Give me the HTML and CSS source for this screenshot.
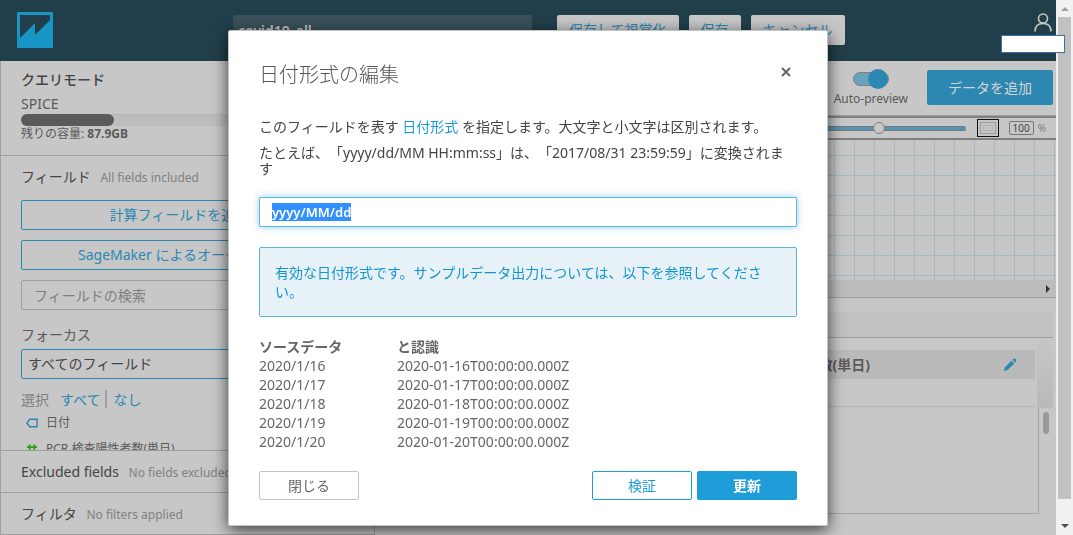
FILE: index.html
```
<!DOCTYPE html>
<html lang="ja">
<head>
    <meta charset="UTF-8">
    <meta name="viewport" content="width=device-width, initial-scale=1.0">
    <title>covid19_all</title>
    <link rel="stylesheet" href="styles.css">
</head>
<body>
    <div class="page">
        <div class="app">
            <header class="header">
                <svg class="logo" viewBox="0 0 36 36">
                    <rect width="36" height="36" rx="1" fill="#1796c5"/>
                    <path d="M3 3H33V8L18 23V11L3 26Z" fill="#213f4b"/>
                </svg>
                <input class="dataset-name" type="text" value="covid19_all" aria-label="データセット名">
                <div class="header-buttons">
                    <button>保存して視覚化</button>
                    <button>保存</button>
                    <button>キャンセル</button>
                </div>
                <svg class="user" viewBox="0 0 18 19" fill="none" stroke="#c7c7c7" stroke-width="1.6">
                    <circle cx="9" cy="5.5" r="4.5"/>
                    <path d="M1 18.5C1 13 4 10.500 9 10.500S17 13 17 18.500"/>
                </svg>
                <div class="user-name"></div>
            </header>

            <div class="content">
                <aside class="sidebar">
                    <section class="spice">
                        <h2>クエリモード</h2>
                        <div class="mode">SPICE</div>
                        <div class="capacity"><div class="used"></div></div>
                        <div class="remaining">残りの容量: <b>87.9GB</b></div>
                    </section>

                    <section class="fields">
                        <h3>フィールド <small>All fields included</small></h3>
                        <button class="wide">計算フィールドを追加</button>
                        <button class="wide">SageMaker によるオーグメント</button>
                        <input class="search" type="text" placeholder="フィールドの検索" aria-label="フィールドの検索">
                        <label for="focus">フォーカス</label>
                        <select id="focus">
                            <option>すべてのフィールド</option>
                        </select>
                        <div class="choose">
                            <span>選択</span>
                            <a href="#">すべて</a>
                            <a class="none" href="#">なし</a>
                        </div>
                        <ul>
                            <li>
                                <svg viewBox="0 0 13 10" fill="none" stroke="#2c87b1" stroke-width="1.5"><path d="M4 1H12V9H4L1 5Z"/></svg>
                                日付
                            </li>
                            <li>
                                <svg viewBox="0 0 13 10" fill="none" stroke="#2c9a16" stroke-width="1.8"><path d="M4 0V10M9 0V10M1 3H12M1 8H12"/></svg>
                                PCR 検査陽性者数(単日)
                            </li>
                        </ul>
                    </section>

                    <section class="folded">
                        <h3>Excluded fields <small>No fields excluded</small></h3>
                    </section>
                    <section class="folded">
                        <h3>フィルタ <small>No filters applied</small></h3>
                    </section>
                </aside>

                <main class="main">
                    <div class="toolbar">
                        <label class="preview">
                            <input type="checkbox" checked>
                            <span class="switch"></span>
                            Auto-preview
                        </label>
                        <button class="add-data">データを追加</button>
                    </div>

                    <div class="zoombar">
                        <input class="zoom" type="range" min="0" max="100" value="72" aria-label="ズーム">
                        <button class="fit" aria-label="全体を表示"><span></span></button>
                        <input class="percent" type="text" value="100" aria-label="倍率">
                        <span class="unit">%</span>
                    </div>

                    <div class="canvas"></div>
                    <div class="hscroll">
                        <svg viewBox="0 0 4 8"><path d="M0 0L4 4L0 8Z" fill="#333"/></svg>
                    </div>

                    <div class="preview-panel">
                        <div class="panel-top"></div>
                        <div class="panel-body">
                            <div class="grid-wrap">
                                <table>
                                    <thead>
                                        <tr>
                                            <th></th>
                                            <th>PCR 検査陽性者数(単日)</th>
                                            <th class="edit">
                                                <svg viewBox="0 0 14 14" fill="#2c87b1"><path d="M0 14L1 10L8 3L11 6L4 13ZM9 2L10.500 .800Q11.500 0 12.500 1Q14 2.200 13 3.500L12 5Z"/></svg>
                                            </th>
                                        </tr>
                                    </thead>
                                    <tbody>
                                        <tr><td></td><td></td><td></td></tr>
                                    </tbody>
                                </table>
                            </div>
                            <div class="grid-scroll"><div class="corner"></div><div class="thumb"></div></div>
                        </div>
                    </div>
                </main>
            </div>
        </div>

        <div class="scrollbar">
            <svg viewBox="0 0 8 4"><path d="M4 0L8 4H0Z" fill="#a3a3a3"/></svg>
            <div class="thumb"></div>
            <svg viewBox="0 0 8 4"><path d="M0 0H8L4 4Z" fill="#505050"/></svg>
        </div>
    </div>

    <!-- 日付形式の編集 -->
    <div class="overlay">
        <div class="modal" role="dialog" aria-labelledby="modal-title">
            <div class="modal-header">
                <h1 id="modal-title">日付形式の編集</h1>
                <button class="close" aria-label="閉じる">
                    <svg viewBox="0 0 10 10" stroke="#666" stroke-width="2"><path d="M1 1L9 9M9 1L1 9"/></svg>
                </button>
            </div>
            <p>このフィールドを表す <a href="#">日付形式</a> を指定します。大文字と小文字は区別されます。</p>
            <p>たとえば、「yyyy/dd/MM HH:mm:ss」は、「2017/08/31 23:59:59」に変換されます</p>
            <input id="format" type="text" value="yyyy/MM/dd" aria-label="日付形式">
            <div class="alert">有効な日付形式です。サンプルデータ出力については、以下を参照してください。</div>
            <table class="samples">
                <tr><th>ソースデータ</th><th>と認識</th></tr>
                <tr><td>2020/1/16</td><td>2020-01-16T00:00:00.000Z</td></tr>
                <tr><td>2020/1/17</td><td>2020-01-17T00:00:00.000Z</td></tr>
                <tr><td>2020/1/18</td><td>2020-01-18T00:00:00.000Z</td></tr>
                <tr><td>2020/1/19</td><td>2020-01-19T00:00:00.000Z</td></tr>
                <tr><td>2020/1/20</td><td>2020-01-20T00:00:00.000Z</td></tr>
            </table>
            <div class="modal-footer">
                <button class="cancel">閉じる</button>
                <button class="validate">検証</button>
                <button class="update">更新</button>
            </div>
        </div>
    </div>

    <script>
        const format = document.getElementById('format');
        format.focus();
        format.select();
    </script>
</body>
</html>
```
FILE: styles.css
```
* {
    margin: 0;
    padding: 0;
    box-sizing: border-box;
}

body {
    font-family: "Noto Sans", "Noto Sans CJK JP", sans-serif;
    font-size: 14px;
    line-height: 20px;
    color: #444;
    background-color: #c7c7c7;
    text-spacing-trim: space-all;
    overflow: hidden;
}

button, input, select {
    font: inherit;
    color: inherit;
}

button {
    cursor: pointer;
    white-space: nowrap;
}

a {
    color: #2c87b1;
    text-decoration: none;
}

svg {
    display: block;
    flex: none;
}

.page {
    display: grid;
    grid-template-columns: 1fr 17px;
    height: 100vh;
}

.app {
    display: flex;
    flex-direction: column;
    min-width: 0;
    height: 100vh;
}

/* Header */
.header {
    position: relative;
    display: flex;
    align-items: center;
    height: 61px;
    flex: none;
    padding: 0 4px 1px 17px;
    background-color: #213f4b;
}

.logo {
    width: 36px;
    height: 36px;
}

.dataset-name {
    width: 299px;
    height: 30px;
    margin-left: 180px;
    padding: 0 5px;
    border: 0;
    border-radius: 2px;
    background-color: #3a515b;
    color: #c7c7c7;
    font-weight: 600;
}

.header-buttons {
    display: flex;
    gap: 10px;
    margin-left: 25px;
}

.header-buttons button {
    height: 30px;
    padding: 0 12px;
    border: 0;
    border-radius: 2px;
    background-color: #c7c7c7;
    color: #2c87b1;
}

.user {
    width: 18px;
    height: 19px;
    margin: 0 0 16px auto;
}

.user-name {
    position: absolute;
    top: 35px;
    right: -9px;
    width: 64px;
    height: 18px;
    border: 1px solid #3f6fa5;
    background-color: #fff;
    z-index: 1;
}

.content {
    display: flex;
    flex: 1;
    min-height: 0;
}

/* Sidebar */
.sidebar {
    display: flex;
    flex-direction: column;
    width: 375px;
    flex: none;
    border: solid #9f9f9f;
    border-width: 0 1px 1px;
}

.sidebar section {
    flex: none;
    padding: 0 20px;
}

.sidebar section + section {
    border-top: 1px solid #9f9f9f;
}

.sidebar h2 {
    font-size: 14px;
    font-weight: 500;
    color: #444;
}

.sidebar h3 {
    font-size: 14px;
    font-weight: 400;
    color: #444;
}

.sidebar small {
    margin-left: 6px;
    font-size: 12px;
    color: #808080;
}

.sidebar .spice {
    height: 94px;
    padding-top: 9px;
}

.mode {
    margin-top: 4px;
    color: #5a5a5a;
}

.capacity {
    height: 12px;
    border-top: 1px solid #b5b5b5;
    border-radius: 6px;
    background-color: #bdbdbd;
}

.used {
    width: 28%;
    height: 12px;
    margin-top: -1px;
    border-radius: 6px;
    background-color: #5a5a5a;
}

.remaining {
    font-size: 12px;
    line-height: 16px;
    color: #5a5a5a;
}

.sidebar .fields {
    flex: 1;
    min-height: 0;
    padding-top: 11px;
    padding-right: 36px;
    overflow: hidden;
}

.fields h3 {
    margin-bottom: 12px;
}

.wide, .search, .fields select {
    display: block;
    width: 100%;
    height: 30px;
    border: 1px solid #2c87b1;
    border-radius: 2px;
    background-color: transparent;
}

.wide {
    margin-bottom: 10px;
    color: #2c87b1;
}

.search {
    padding: 0 12px;
    border-color: #9f9f9f;
}

.search::placeholder {
    color: #808080;
}

.fields label {
    display: block;
    margin-top: 15px;
    margin-bottom: 4px;
    color: #5a5a5a;
}

.fields select {
    padding: 0 6px;
    appearance: none;
}

.choose {
    display: flex;
    gap: 11px;
    margin-top: 11px;
    color: #808080;
}

.choose .none {
    height: 18px;
    margin-left: -6px;
    padding-left: 6px;
    border-left: 2px solid #9f9f9f;
}

.fields ul {
    list-style: none;
}

.fields li {
    display: flex;
    align-items: center;
    gap: 8px;
    height: 26px;
    padding-left: 5px;
    font-size: 12px;
    color: #5a5a5a;
}

.fields li svg {
    width: 12px;
    height: 10px;
}

.sidebar .folded {
    height: 42px;
    padding-top: 11px;
}

/* Main area */
.main {
    display: flex;
    flex-direction: column;
    flex: 1;
    min-width: 0;
}

.toolbar {
    display: flex;
    justify-content: flex-end;
    align-items: center;
    gap: 19px;
    height: 55px;
    padding-right: 3px;
    padding-bottom: 1px;
    border-bottom: 1px solid #9f9f9f;
}

.preview {
    position: relative;
    display: flex;
    flex-direction: column;
    align-items: center;
    font-size: 12px;
    line-height: 16px;
    color: #5a5a5a;
}

.preview input {
    position: absolute;
    opacity: 0;
}

.switch {
    display: flex;
    justify-content: flex-end;
    align-items: center;
    width: 36px;
    height: 14px;
    margin: 3px 0 5px;
    border: 1px solid #808080;
    border-radius: 7px;
    background-color: #68a2bd;
}

.switch::after {
    content: "";
    width: 20px;
    height: 20px;
    flex: none;
    border-radius: 50%;
    background-color: #2c87b1;
}

.add-data {
    width: 126px;
    height: 35px;
    border: 0;
    border-radius: 2px;
    background-color: #2c87b1;
    color: #d5d5d5;
}

.zoombar {
    display: flex;
    justify-content: flex-end;
    align-items: center;
    height: 24px;
    padding-right: 10px;
    border: solid #808080;
    border-width: 2px 0;
}

.zoom {
    width: 300px;
    height: 14px;
    appearance: none;
    background-color: transparent;
}

.zoom::-webkit-slider-runnable-track {
    height: 5px;
    border: 1px solid #777;
    border-width: 1px 0;
    border-radius: 2px;
    background-color: #5495b3;
}

.zoom::-webkit-slider-thumb {
    appearance: none;
    width: 12px;
    height: 12px;
    margin-top: -5px;
    border: 1px solid #808080;
    border-radius: 50%;
    background-color: #c7c7c7;
}

.fit {
    width: 22px;
    height: 18px;
    margin-left: 11px;
    padding: 2px;
    border: 1px solid #111;
    background-color: transparent;
}

.fit span {
    display: block;
    height: 100%;
    border: 1px solid #9a9a9a;
    outline: 1px solid #b0b0b0;
    outline-offset: -4px;
}

.percent {
    width: 25px;
    height: 14px;
    margin: 0 4px 0 10px;
    border: 1px solid #777;
    border-radius: 2px;
    background-color: transparent;
    font-size: 10px;
    text-align: center;
}

.unit {
    font-size: 10px;
    color: #808080;
}

.canvas {
    height: 140px;
    background-image:
        linear-gradient(90deg, #a6b9bf 1px, transparent 1px),
        linear-gradient(#a6b9bf 1px, transparent 1px);
    background-size: 20px 20px;
    background-position: 19px 15px;
}

.hscroll {
    display: flex;
    justify-content: flex-end;
    align-items: center;
    height: 18px;
    padding-right: 6px;
    border-bottom: 1px solid #9f9f9f;
    background-color: #bcbcbc;
}

.hscroll svg {
    width: 4px;
    height: 8px;
}

.preview-panel {
    display: flex;
    flex-direction: column;
    flex: 1;
    margin: 14px 3px 21px 12px;
}

.panel-top {
    height: 26px;
    border-bottom: 1px solid #9f9f9f;
    background-color: #c1c1c1;
}

.panel-body {
    display: flex;
    flex: 1;
}

.grid-wrap {
    flex: 1;
    padding: 12px 3px 0 0;
    border: solid #a5a5a5;
    border-width: 0 1px 1px 0;
}

.grid-wrap table {
    width: 100%;
    border-collapse: collapse;
}

.grid-wrap th {
    height: 29px;
    background-color: #bababa;
    color: #5a5a5a;
    font-weight: 700;
    text-align: left;
}

.grid-wrap th:nth-child(2) {
    width: 286px;
}

.grid-wrap .edit {
    width: 31px;
}

.edit svg {
    width: 13px;
    height: 13px;
}

.grid-wrap td {
    height: 27px;
    border-bottom: 1px solid #b5b5b5;
}

.grid-scroll {
    width: 14px;
}

.corner {
    height: 70px;
    margin-left: -2px;
    background: linear-gradient(#c7c7c7, #b9b9b9);
}

.grid-scroll .thumb {
    width: 6px;
    height: 22px;
    margin: 4px auto;
    border-radius: 3px;
    background-color: #9a9a9a;
}

/* Window scrollbar */
.scrollbar {
    display: flex;
    flex-direction: column;
    align-items: center;
    padding: 7px 2px 7px;
    background-color: #f1f1f1;
}

.scrollbar svg {
    width: 8px;
    height: 4px;
}

.scrollbar .thumb {
    width: 13px;
    flex: 1;
    margin: 6px 0 25px;
    background-color: #c1c1c1;
}

/* Modal */
.overlay {
    position: fixed;
    inset: 0 17px 0 0;
    display: flex;
    justify-content: center;
    align-items: flex-start;
    padding-top: 30px;
}

.modal {
    width: 600px;
    padding: 30px 30px 25px;
    border: 1px solid #c4c4c4;
    border-radius: 2px;
    background-color: #fff;
    box-shadow: 0 4px 16px rgba(0, 0, 0, 0.7);
}

.modal-header {
    display: flex;
    justify-content: space-between;
    align-items: flex-start;
    margin-bottom: 30px;
}

.modal h1 {
    font-size: 20px;
    font-weight: 300;
    line-height: 28px;
    color: #555;
}

.close {
    margin: 6px;
    border: 0;
    background-color: transparent;
}

.close svg {
    width: 10px;
    height: 10px;
}

.modal p {
    margin-bottom: 10px;
    line-height: 16px;
}

.modal a {
    color: #1a9cd8;
}

#format {
    display: block;
    width: 100%;
    height: 30px;
    margin-top: 20px;
    padding: 0 12px;
    border: 1px solid #5db5dc;
    border-radius: 2px;
    outline: 0;
    box-shadow: 0 0 7px rgba(26, 156, 216, 0.5);
    font-size: 13px;
    font-weight: 600;
}

#format::selection {
    background-color: #3390ff;
    color: #fff;
}

.alert {
    margin-top: 20px;
    padding: 15px;
    border: 1px solid #5db5dc;
    border-radius: 2px;
    background-color: #e6f2f8;
    color: #1494d0;
    line-height: 19px;
}

.samples {
    margin-top: 20px;
    border-collapse: collapse;
    color: #666;
    line-height: 19px;
}

.samples th {
    text-align: left;
}

.samples th:first-child {
    width: 138px;
}

.modal-footer {
    display: flex;
    gap: 5px;
    margin-top: 20px;
}

.modal-footer button {
    width: 100px;
    height: 29px;
    border: 1px solid #1f9dd9;
    border-radius: 2px;
    background-color: #fff;
    color: #1a9cd8;
}

.modal-footer .cancel {
    margin-right: auto;
    border-color: #c4c4c4;
    color: #666;
}

.modal-footer .update {
    background-color: #1f9dd9;
    color: #fff;
    font-weight: 600;
}
```
